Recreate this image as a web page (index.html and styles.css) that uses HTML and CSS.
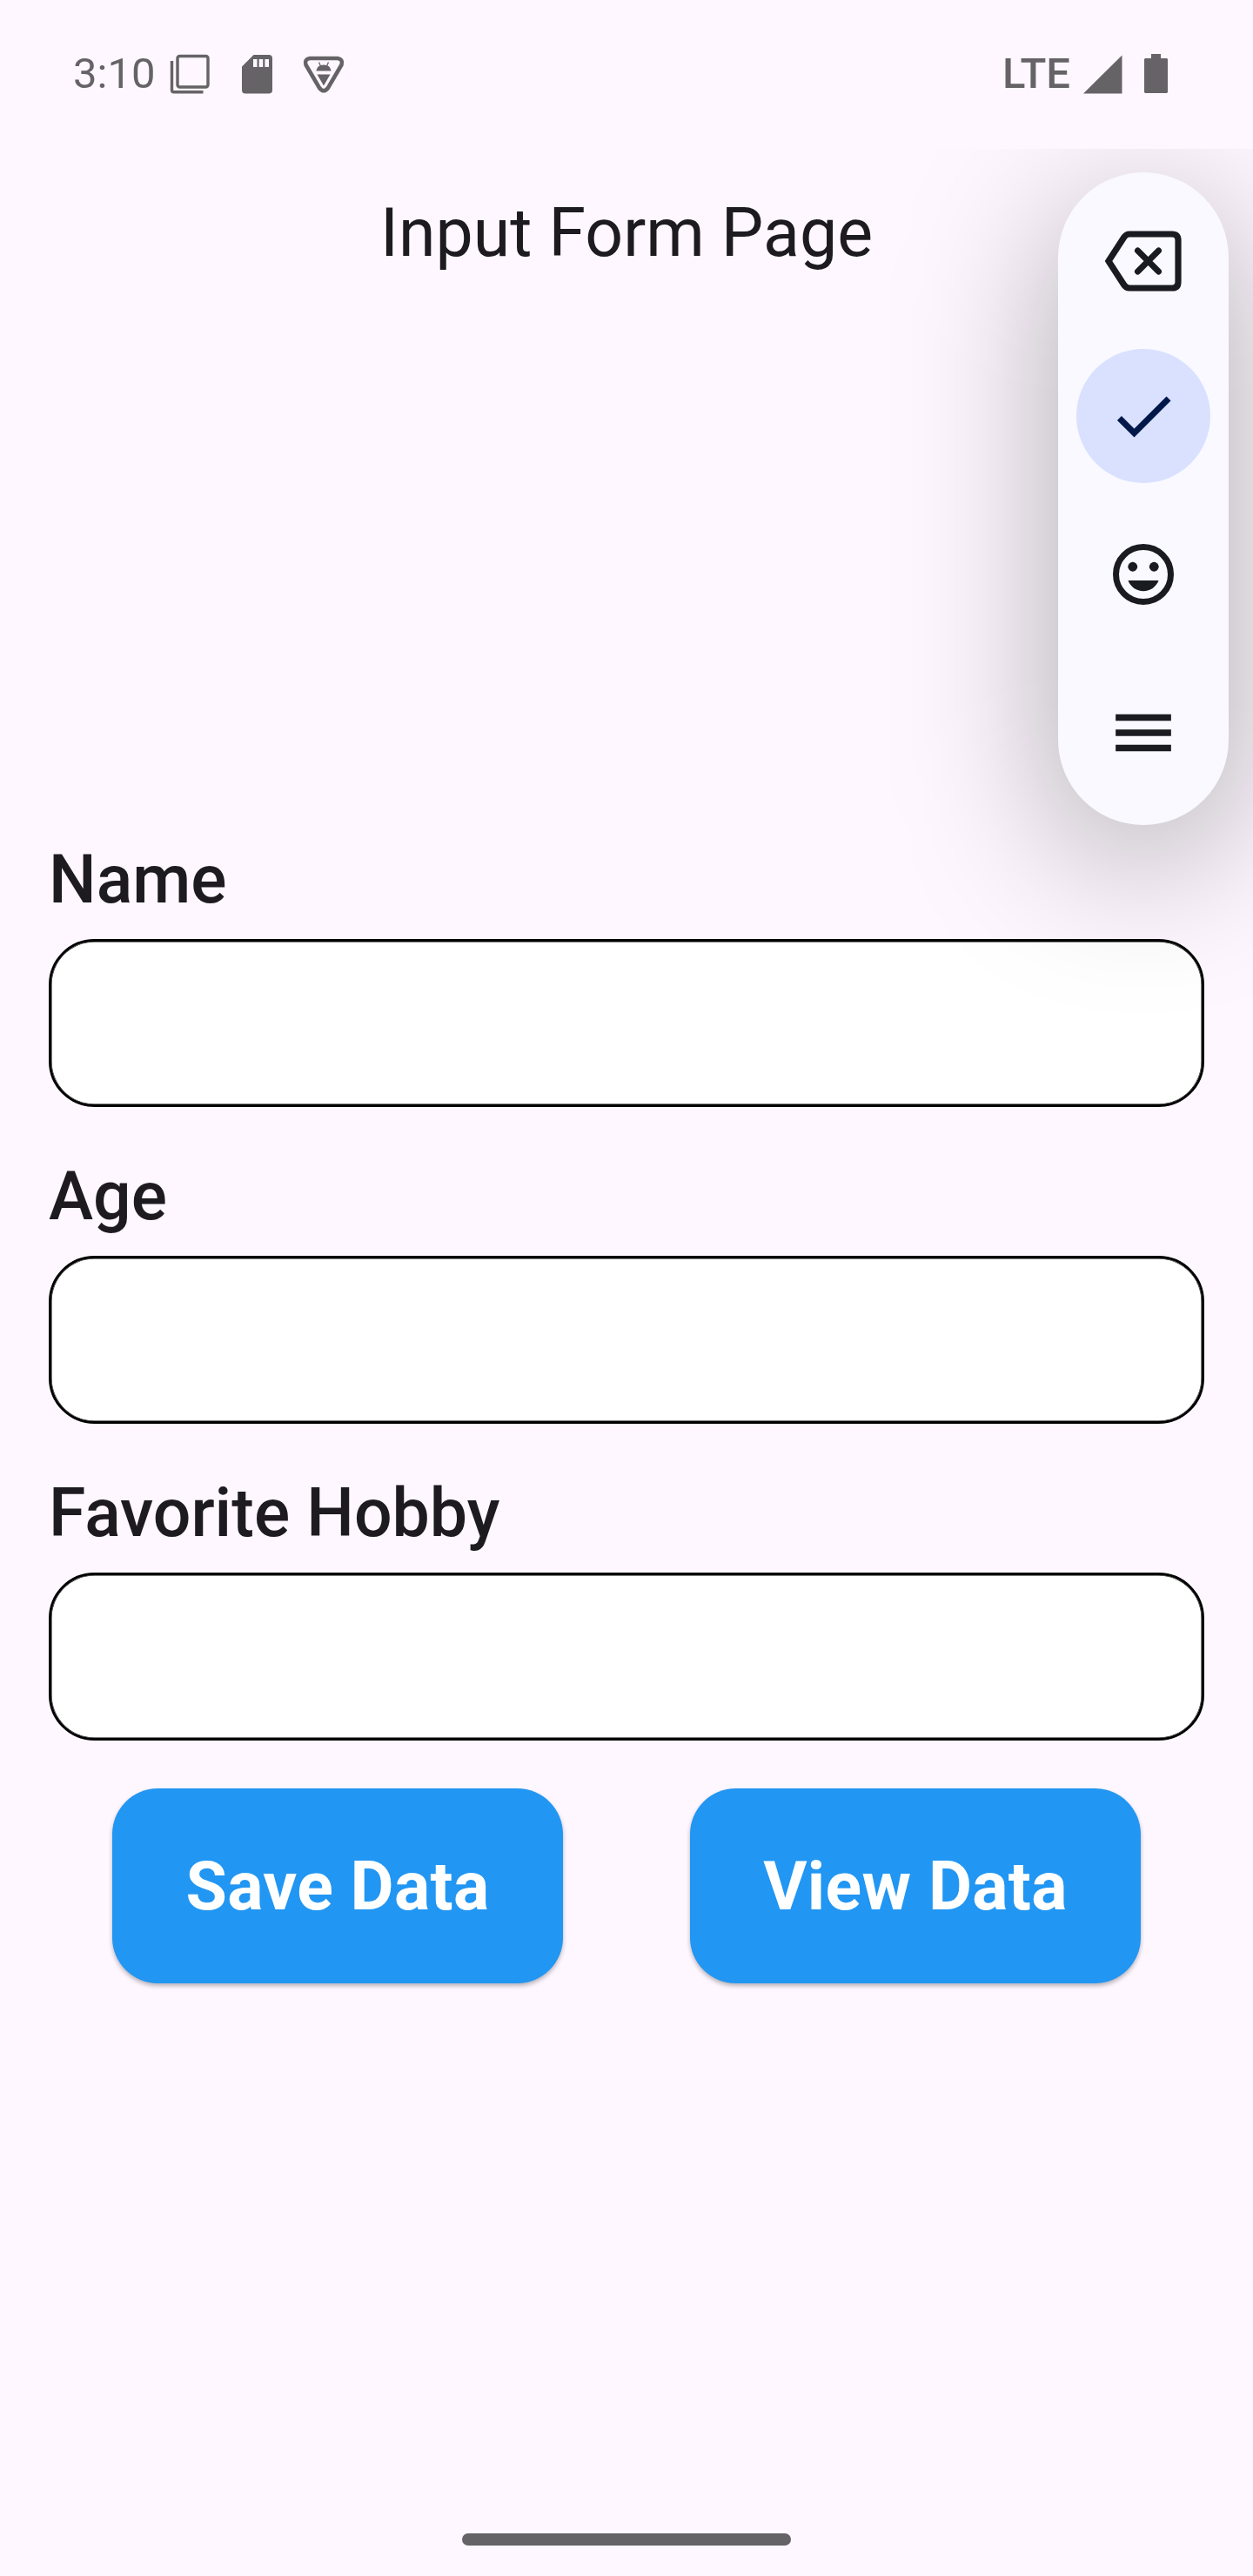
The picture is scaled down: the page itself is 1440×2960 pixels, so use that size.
FILE: index.html
```html
<!DOCTYPE html>
<html lang="en">
<head>
<meta charset="utf-8">
<title>Input Form Page</title>
<link rel="stylesheet" href="styles.css">
</head>
<body>
<div class="screen">
  <header class="status-bar">
    <div class="status-left">
      <span class="clock">3:10</span>
      <svg class="icon-layers" width="46" height="46" viewBox="0 0 46 46" fill="none" stroke="currentColor" stroke-width="3.400">
        <rect x="9" y="2.500" width="35" height="35.500" rx="2.500"/>
        <path d="M2.500 8V41.500Q2.500 43.800 4.800 43.800H38.500"/>
      </svg>
      <svg class="icon-sd" width="35" height="45" viewBox="0 0 35 45" fill="currentColor">
        <path fill-rule="evenodd" d="M13.5 0H31Q35 0 35 4V40.500Q35 44.500 31 44.500H4Q0 44.500 0 40.500V13.500ZM13 5V14H17.500V5ZM19.700 5V14H24.200V5ZM26.400 5V14H31V5Z"/>
      </svg>
      <svg class="icon-debug" width="48" height="44" viewBox="0 0 48 44">
        <path d="M8 3H40Q46.500 4 44.500 10.500L29 37Q24 43.500 19 37L3.500 10.500Q1.500 4 8 3Z" fill="none" stroke="currentColor" stroke-width="4.600"/>
        <path d="M15.300 17.500Q16.500 10.500 24 10.500T32.700 17.500ZM16.500 21.500H31.500L24 34.500Z" fill="currentColor"/>
        <path d="M18.500 7.500L20.500 12M29.500 7.500L27.500 12" stroke="currentColor" stroke-width="1.300"/>
      </svg>
    </div>
    <div class="status-right">
      <span class="network">LTE</span>
      <svg class="icon-signal" width="45" height="45" viewBox="0 0 45 45" fill="currentColor"><path d="M0 44.500L44.500 .5V44.500Z"/></svg>
      <svg class="icon-battery" width="27" height="45" viewBox="0 0 27 45" fill="currentColor"><path d="M8 0H19V5H26L27 6V44L26 45H1L0 44V6L1 5H8Z"/></svg>
    </div>
  </header>

  <h1 class="app-title">Input Form Page</h1>

  <form class="form">
    <label class="field"><span class="field-label">Name</span><input class="field-input" type="text"></label>
    <label class="field"><span class="field-label">Age</span><input class="field-input" type="text"></label>
    <label class="field"><span class="field-label">Favorite Hobby</span><input class="field-input" type="text"></label>
    <div class="actions">
      <button class="button" type="button">Save Data</button>
      <button class="button" type="button">View Data</button>
    </div>
  </form>

  <div class="home-handle"></div>

  <div class="overlay">
    <div class="toolbar-shadow"></div>
    <div class="toolbar">
      <div class="tool">
        <svg width="90" height="70" viewBox="0 0 90 70" fill="none" stroke="currentColor">
          <path d="M5 35L22.500 8Q25 4 29 4H78Q85 4 85 11V59Q85 66 78 66H29Q25 66 22.500 62Z" stroke-width="7.200"/>
          <path d="M38.500 23L62.500 47M62.500 23L38.500 47" stroke-width="7" stroke-linecap="round"/>
        </svg>
      </div>
      <div class="tool tool-active">
        <svg width="84" height="84" viewBox="0 0 24 24" fill="currentColor"><path d="M9 16.170L4.830 12l-1.420 1.410L9 19 21 7l-1.410-1.410z"/></svg>
      </div>
      <div class="tool">
        <svg width="84" height="84" viewBox="0 0 24 24" fill="currentColor">
          <circle cx="12" cy="12" r="9" fill="none" stroke="currentColor" stroke-width="2"/>
          <circle cx="8.500" cy="9.500" r="1.550"/><circle cx="15.500" cy="9.500" r="1.550"/>
          <path d="M7 14C7.800 16.100 9.700 17.500 12 17.500S16.200 16.100 17 14Z"/>
        </svg>
      </div>
      <div class="tool">
        <svg width="84" height="84" viewBox="0 0 24 24" fill="currentColor"><path d="M2.900 5.900h18.200v2.200H2.900zM2.900 10.900h18.200v2.200H2.900zM2.900 15.900h18.200v2.200H2.900z"/></svg>
      </div>
    </div>
  </div>
</div>
</body>
</html>
```
FILE: styles.css
```css
* {
  box-sizing: border-box;
}

body {
  margin: 0;
  background: #fef7ff;
  color: #1d1b20;
  font-family: Roboto, "Liberation Sans", sans-serif;
}

svg {
  display: block;
  flex: none;
}

.screen {
  position: relative;
  display: flex;
  flex-direction: column;
  width: 1440px;
  height: 2960px;
  overflow: hidden;
}

.status-bar {
  display: flex;
  justify-content: space-between;
  height: 171px;
  padding: 0 98px 0 84px;
  color: #666367;
  font-size: 49px;
  line-height: 58px;
}

.status-left,
.status-right {
  display: flex;
  align-items: flex-start;
  padding-top: 62px;
}

.clock,
.network {
  margin-top: -6px;
}

.clock {
  width: 111px;
}

.network {
  font-weight: 500;
  margin-right: 15px;
}

.icon-sd {
  margin: 1px 35px 0 37px;
}

.icon-debug {
  margin-top: 2px;
}

.icon-signal {
  margin: 1px 25px 0 0;
}

.app-title {
  margin: 0;
  height: 196px;
  font-size: 77px;
  font-weight: 400;
  line-height: 194px;
  text-align: center;
}

.form {
  display: flex;
  flex-direction: column;
  gap: 58px;
  margin-top: 599px;
  padding: 0 56px;
}

.field {
  display: flex;
  flex-direction: column;
  gap: 23px;
}

.field-label {
  font-size: 77px;
  font-weight: 500;
  line-height: 90px;
}

.field-input {
  width: 100%;
  height: 193px;
  padding: 0 42px;
  border: 3px solid #000;
  border-radius: 52.5px;
  background: #fff;
  box-shadow: inset 0 0 0 .5px #000;
  font: inherit;
  font-size: 56px;
}

.actions {
  display: flex;
  justify-content: space-around;
  margin-top: -3px;
}

.button {
  width: 517.5px;
  height: 224px;
  padding: 2px 0 0;
  border: 0;
  border-radius: 52.5px;
  background: #2196f3;
  box-shadow: 0 3px 5px rgba(0, 0, 0, .28);
  color: #fff;
  font: 700 77px/90px Roboto, "Liberation Sans", sans-serif;
  letter-spacing: .35px;
}

.home-handle {
  width: 378px;
  height: 14px;
  margin: auto auto 35px;
  border-radius: 7px;
  background: #666367;
}

/* Floating keyboard toolbar; its shadow stops at the status bar */
.overlay {
  position: absolute;
  inset: 171px 0 0;
  overflow: hidden;
  pointer-events: none;
}

.toolbar,
.toolbar-shadow {
  position: absolute;
  right: 28px;
  width: 196px;
  height: 750px;
  border-radius: 98px;
}

.toolbar-shadow {
  top: 67px;
  background: rgba(0, 0, 0, .33);
  filter: blur(88px);
}

.toolbar {
  top: 27px;
  display: flex;
  flex-direction: column;
  align-items: center;
  gap: 28px;
  padding: 25px 0;
  background: #f9f9ff;
  color: #1a1b20;
}

.tool {
  display: flex;
  align-items: center;
  justify-content: center;
  width: 154px;
  height: 154px;
}

.tool-active {
  margin-top: -4px;
  border-radius: 50%;
  background: #dae1ff;
  color: #001849;
}
```
